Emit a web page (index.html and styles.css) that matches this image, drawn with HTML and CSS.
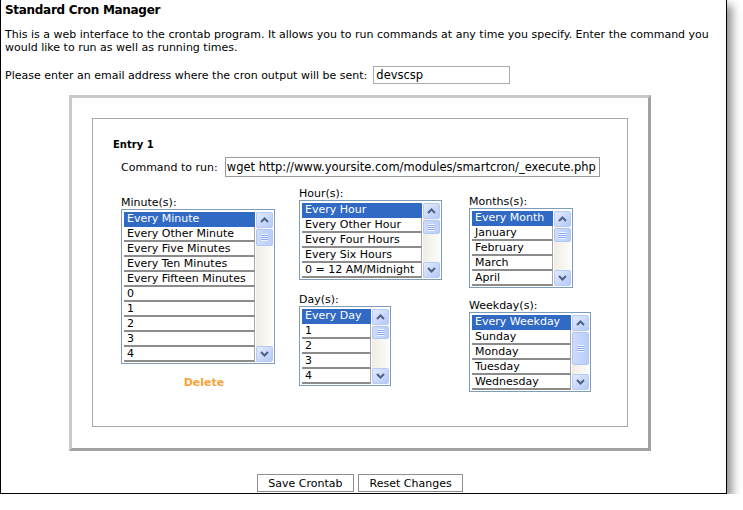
FILE: index.html
```html
<!DOCTYPE html>
<html>
<head>
<meta charset="utf-8">
<title>Standard Cron Manager</title>
<link rel="stylesheet" href="styles.css">
</head>
<body>
<div class="window">
  <h1 class="title">Standard Cron Manager</h1>
  <p class="intro">This is a web interface to the crontab program. It allows you to run commands at any time you specify. Enter the command you would like to run as well as running times.</p>
  <div class="email-row">
    <span>Please enter an email address where the cron output will be sent:</span>
    <input class="email-input" type="text" value="devscsp">
  </div>

  <div class="outer">
    <div class="inner">
      <div class="entry">Entry 1</div>
      <div class="cmd-row">
        <span class="cmd-label">Command to run:</span>
        <input class="cmd-input" type="text" value="wget http://www.yoursite.com/modules/smartcron/_execute.php">
      </div>

      <div class="cols">
        <div class="col col1">
          <div class="lbl">Minute(s):</div>
          <div class="listbox">
            <div class="opts">
              <div class="opt sel">Every Minute</div>
              <div class="opt">Every Other Minute</div>
              <div class="opt">Every Five Minutes</div>
              <div class="opt">Every Ten Minutes</div>
              <div class="opt">Every Fifteen Minutes</div>
              <div class="opt">0</div>
              <div class="opt">1</div>
              <div class="opt">2</div>
              <div class="opt">3</div>
              <div class="opt">4</div>
            </div>
            <div class="sb">
              <div class="sb-btn"><svg width="9" height="6" viewBox="0 0 9 6"><polyline points="1,5 4.5,1.5 8,5" fill="none" stroke="#4d6185" stroke-width="2"/></svg></div>
              <div class="thumb" style="height:17px"><div class="grip"></div></div>
              <div class="track"></div>
              <div class="sb-btn"><svg width="9" height="6" viewBox="0 0 9 6"><polyline points="1,1 4.5,4.5 8,1" fill="none" stroke="#4d6185" stroke-width="2"/></svg></div>
            </div>
          </div>
          <div class="delete">Delete</div>
        </div>

        <div class="col col2">
          <div class="lbl">Hour(s):</div>
          <div class="listbox">
            <div class="opts">
              <div class="opt sel">Every Hour</div>
              <div class="opt">Every Other Hour</div>
              <div class="opt">Every Four Hours</div>
              <div class="opt">Every Six Hours</div>
              <div class="opt">0 = 12 AM/Midnight</div>
            </div>
            <div class="sb">
              <div class="sb-btn"><svg width="9" height="6" viewBox="0 0 9 6"><polyline points="1,5 4.5,1.5 8,5" fill="none" stroke="#4d6185" stroke-width="2"/></svg></div>
              <div class="thumb" style="height:14px"><div class="grip"></div></div>
              <div class="track"></div>
              <div class="sb-btn"><svg width="9" height="6" viewBox="0 0 9 6"><polyline points="1,1 4.5,4.5 8,1" fill="none" stroke="#4d6185" stroke-width="2"/></svg></div>
            </div>
          </div>

          <div class="lbl lbl-gap2">Day(s):</div>
          <div class="listbox">
            <div class="opts">
              <div class="opt sel">Every Day</div>
              <div class="opt">1</div>
              <div class="opt">2</div>
              <div class="opt">3</div>
              <div class="opt">4</div>
            </div>
            <div class="sb">
              <div class="sb-btn"><svg width="9" height="6" viewBox="0 0 9 6"><polyline points="1,5 4.5,1.5 8,5" fill="none" stroke="#4d6185" stroke-width="2"/></svg></div>
              <div class="thumb" style="height:13px"><div class="grip"></div></div>
              <div class="track"></div>
              <div class="sb-btn"><svg width="9" height="6" viewBox="0 0 9 6"><polyline points="1,1 4.5,4.5 8,1" fill="none" stroke="#4d6185" stroke-width="2"/></svg></div>
            </div>
          </div>
        </div>

        <div class="col col3">
          <div class="lbl">Months(s):</div>
          <div class="listbox">
            <div class="opts">
              <div class="opt sel">Every Month</div>
              <div class="opt">January</div>
              <div class="opt">February</div>
              <div class="opt">March</div>
              <div class="opt">April</div>
            </div>
            <div class="sb">
              <div class="sb-btn"><svg width="9" height="6" viewBox="0 0 9 6"><polyline points="1,5 4.5,1.5 8,5" fill="none" stroke="#4d6185" stroke-width="2"/></svg></div>
              <div class="thumb" style="height:14px"><div class="grip"></div></div>
              <div class="track"></div>
              <div class="sb-btn"><svg width="9" height="6" viewBox="0 0 9 6"><polyline points="1,1 4.5,4.5 8,1" fill="none" stroke="#4d6185" stroke-width="2"/></svg></div>
            </div>
          </div>

          <div class="lbl lbl-gap3">Weekday(s):</div>
          <div class="listbox">
            <div class="opts">
              <div class="opt sel">Every Weekday</div>
              <div class="opt">Sunday</div>
              <div class="opt">Monday</div>
              <div class="opt">Tuesday</div>
              <div class="opt">Wednesday</div>
            </div>
            <div class="sb">
              <div class="sb-btn"><svg width="9" height="6" viewBox="0 0 9 6"><polyline points="1,5 4.5,1.5 8,5" fill="none" stroke="#4d6185" stroke-width="2"/></svg></div>
              <div class="thumb" style="height:33px"><div class="grip"></div></div>
              <div class="track"></div>
              <div class="sb-btn"><svg width="9" height="6" viewBox="0 0 9 6"><polyline points="1,1 4.5,4.5 8,1" fill="none" stroke="#4d6185" stroke-width="2"/></svg></div>
            </div>
          </div>
        </div>
      </div>
    </div>
  </div>

  <div class="actions">
    <button class="btn" type="button">Save Crontab</button>
    <button class="btn" type="button">Reset Changes</button>
  </div>
</div>
</body>
</html>
```

FILE: styles.css
```css
html, body {
  margin: 0;
  padding: 0;
  background: #fff;
}

body {
  font-family: "DejaVu Sans", Verdana, sans-serif;
  font-size: 11px;
  color: #000;
}

.window {
  box-sizing: border-box;
  width: 727px;
  height: 494px;
  padding: 0 4px;
  border-left: 1px solid #000;
  border-right: 1px solid #000;
  border-bottom: 1px solid #000;
  box-shadow: 5px 5px 9px rgba(0, 0, 0, 0.45);
  background: #fff;
}

.title {
  margin: 0;
  padding-top: 2px;
  font-size: 12px;
  font-weight: bold;
  line-height: 16px;
  letter-spacing: -0.3px;
}

.intro {
  margin: 10px 0 0;
  line-height: 13px;
}

.email-row {
  display: flex;
  align-items: center;
  height: 18px;
  margin-top: 12px;
  line-height: 13px;
}

.email-input {
  box-sizing: border-box;
  width: 137px;
  height: 18px;
  margin: 0 0 0 6px;
  padding: 0 2px;
  border: 1px solid #a5acb2;
  font-family: "DejaVu Sans", Verdana, sans-serif;
  font-size: 11.5px;
  color: #000;
  outline: none;
}

.outer {
  box-sizing: border-box;
  width: 582px;
  height: 356px;
  margin: 11px 0 0 64px;
  padding: 20px;
  border: 3px solid;
  border-color: #c9c9c9 #a2a2a2 #a2a2a2 #c9c9c9;
}

.inner {
  box-sizing: border-box;
  height: 309px;
  padding: 19px 20px 0;
  border: 1px solid #a8a8a8;
}

.entry {
  font-size: 10px;
  font-weight: bold;
  line-height: 13px;
}

.cmd-row {
  display: flex;
  align-items: center;
  height: 20px;
  margin: 6px 0 0 8px;
}

.cmd-label {
  font-size: 11px;
}

.cmd-input {
  box-sizing: border-box;
  width: 375px;
  height: 20px;
  margin: 0 0 0 7px;
  padding: 0 1px;
  border: 1px solid #9a9a9a;
  font-family: "DejaVu Sans", Verdana, sans-serif;
  font-size: 11.5px;
  color: #000;
  outline: none;
}

.cols {
  display: flex;
  align-items: flex-start;
  margin: 11px 0 0 8px;
}

.col1 {
  width: 154px;
  margin-top: 9px;
}

.col2 {
  width: 143px;
  margin-left: 24px;
}

.col3 {
  margin-left: 27px;
  margin-top: 8px;
}

.col1 .listbox { width: 154px; }
.col2 .listbox { width: 143px; }
.col2 .listbox + .lbl + .listbox { width: 92px; }
.col3 .listbox { width: 104px; }
.col3 .listbox + .lbl + .listbox { width: 122px; }

.lbl {
  height: 12px;
  line-height: 12px;
  white-space: nowrap;
}

.lbl-gap2 { margin-top: 14px; }
.lbl-gap3 { margin-top: 12px; }

.listbox {
  box-sizing: border-box;
  display: flex;
  padding: 2px 1px 1px 2px;
  border: 1px solid #7f9db9;
  background: #fff;
}

.opts {
  flex: 1;
  min-width: 0;
  margin-right: 1px;
}

.opt {
  height: 13px;
  padding-left: 3px;
  line-height: 13px;
  white-space: nowrap;
  overflow: hidden;
  border-bottom: 2px solid #8c8c8c;
  border-right: 1px solid #a8a8a8;
  background: #fff;
  color: #000;
}

.opt.sel {
  background: #316ac5;
  border-bottom-color: #316ac5;
  border-right-color: #316ac5;
  color: #fff;
}

.sb {
  width: 17px;
  display: flex;
  flex-direction: column;
  background: linear-gradient(90deg, #efede5, #fcfcf9);
}

.sb-btn {
  box-sizing: border-box;
  height: 16px;
  display: flex;
  align-items: center;
  justify-content: center;
  border: 1px solid #b7caf5;
  border-radius: 2px;
  background: linear-gradient(135deg, #e3ebfe, #b4c9f7);
}

.thumb {
  box-sizing: border-box;
  margin-top: 1px;
  display: flex;
  align-items: center;
  justify-content: center;
  border: 1px solid #b1c6f4;
  border-radius: 2px;
  background: linear-gradient(90deg, #cddbfc, #bacef8);
}

.grip {
  width: 7px;
  height: 7px;
  background: repeating-linear-gradient(to bottom, #eef3fe 0 1px, #8eaaee 1px 2px);
}

.track {
  flex: 1;
}

.delete {
  margin-top: 12px;
  padding-left: 12px;
  text-align: center;
  font-weight: bold;
  font-size: 11px;
  line-height: 13px;
  color: #f5a43c;
}

.actions {
  display: flex;
  justify-content: center;
  gap: 4px;
  margin-top: 23px;
  padding-right: 7px;
}

.btn {
  box-sizing: border-box;
  height: 18px;
  margin: 0;
  padding: 0 10.5px;
  border: 1px solid #8e8e8e;
  border-radius: 0;
  background: #fff;
  font-family: "DejaVu Sans", Verdana, sans-serif;
  font-size: 11px;
  color: #000;
}
```
